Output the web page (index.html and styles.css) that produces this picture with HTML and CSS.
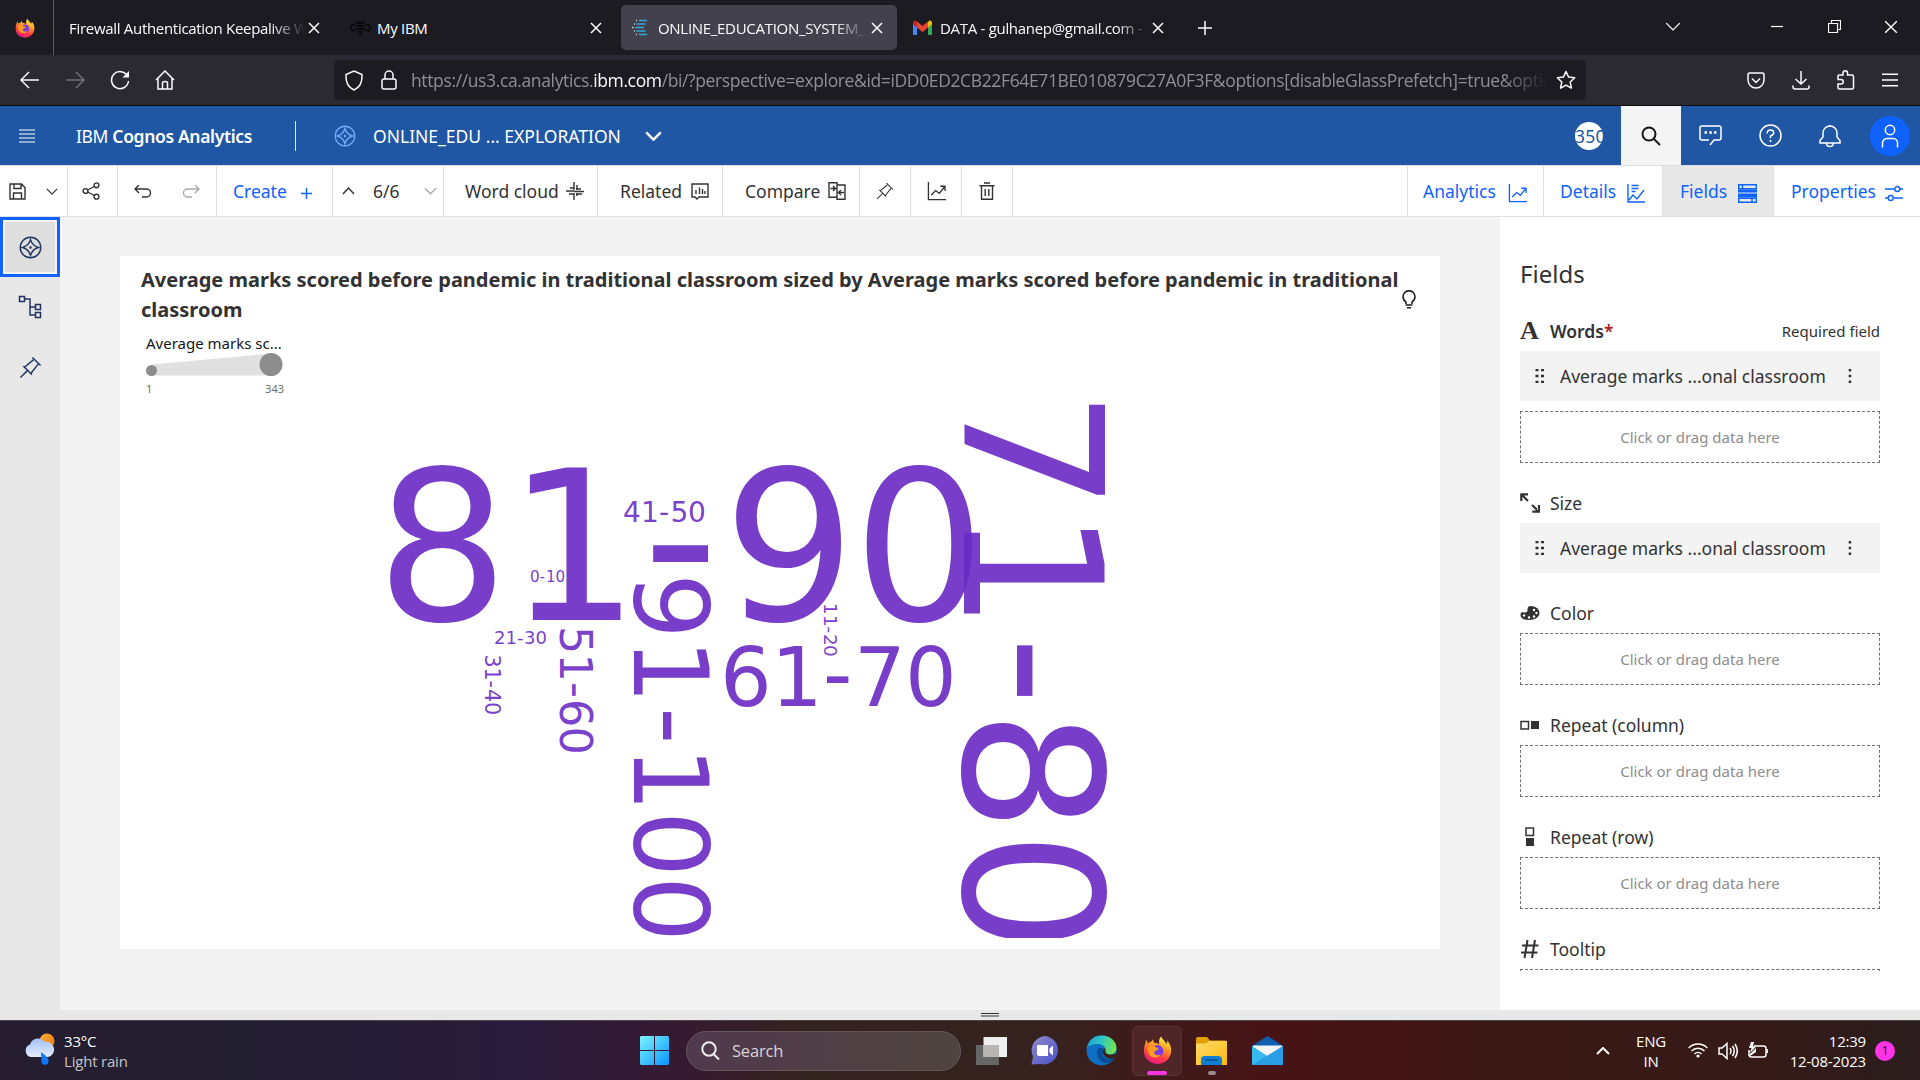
FILE: index.html
```html
<!DOCTYPE html>
<html lang="en">
<head>
<meta charset="utf-8">
<title>ONLINE_EDUCATION_SYSTEM_EXPLORATION</title>
<link rel="stylesheet" href="styles.css">
</head>
<body>
<svg width="0" height="0" class="defs">
  <defs>
    <linearGradient id="flame" x1=".7" y1="0" x2=".3" y2="1"><stop offset="0" stop-color="#fff44f"/><stop offset=".35" stop-color="#ffa020"/><stop offset=".7" stop-color="#ff3b45"/><stop offset="1" stop-color="#e31587"/></linearGradient>
    <linearGradient id="win" x1="0" y1="0" x2="1" y2="1"><stop offset="0" stop-color="#7df4ff"/><stop offset="1" stop-color="#0a94ff"/></linearGradient>
    <linearGradient id="edgeg" x1="0" y1="0" x2="1" y2=".2"><stop offset="0" stop-color="#1a9fd8"/><stop offset=".5" stop-color="#2fc3c6"/><stop offset="1" stop-color="#6be35a"/></linearGradient>
    <linearGradient id="cloud" x1="0" y1="0" x2="0" y2="1"><stop offset="0" stop-color="#a6c0f4"/><stop offset="1" stop-color="#e4ecff"/></linearGradient>
    <linearGradient id="sun" x1="0" y1="0" x2="1" y2="1"><stop offset="0" stop-color="#f6b53a"/><stop offset="1" stop-color="#f2720c"/></linearGradient>
    <linearGradient id="meet" x1="0" y1="0" x2="1" y2="1"><stop offset="0" stop-color="#8f8cc9"/><stop offset="1" stop-color="#4a50c8"/></linearGradient>
    <linearGradient id="folder" x1="0" y1="0" x2="1" y2="1"><stop offset="0" stop-color="#ffdc6b"/><stop offset="1" stop-color="#fbb90e"/></linearGradient>
    <symbol id="x" viewBox="0 0 12 12"><path d="M1 1l10 10M11 1L1 11"/></symbol>
    <symbol id="down" viewBox="0 0 14 8"><path d="M1 1l6 6 6-6"/></symbol>
    <symbol id="firefox" viewBox="0 0 32 32">
      <path d="M20 1c1 3 4 4.500 6 8 1-1 1-2 .6-3.500C30 9 31.500 13 31 18c-.8 8-7 13.500-15 13.500S1 25.500 1 17.500C1 12 2.500 9.500 3.500 5c1 1 1.500 2.500 1.700 4 1.500-1.500 3.300-2 4.300-2.300L11 4l1 4c3 0 5 1 6 2-1-4 0-7 2-9z" fill="url(#flame)"/>
      <circle cx="16" cy="17" r="6.500" fill="#7a3be0"/>
      <path d="M5 13c3-3 7-2.500 9 0 3 .5 4 2 2 3-2 .4-4 1.500-3.500 3.500.7 2 4 3 7 1.500-2 4-8 4.500-12 1C5 19.500 4.500 16 5 13z" fill="#ff9a20"/>
    </symbol>
    <symbol id="compass" viewBox="0 0 24 24"><circle cx="12" cy="12" r="10.700"/><path d="M12 3.800q1.900 6.300 8.200 8.200-6.300 1.900-8.200 8.200Q10.100 13.900 3.800 12 10.100 10.100 12 3.800z"/><circle cx="12" cy="12" r=".6"/></symbol>
    <symbol id="pin" viewBox="0 0 24 24"><path d="M1.500 22.500l7.500-7.500M4.500 10.500l9 9M6 11.500l9-7.500M14 1.500l8.500 8.500M12.500 18l7.500-9.500"/></symbol>
    <symbol id="trend" viewBox="0 0 20 20"><path d="M1.500 0v18.500H20M4.500 14l4.500-5 4 3 5.500-7M14 4.500h5v5"/></symbol>
    <symbol id="grip" viewBox="0 0 10 14"><path d="M.5 1h3M6 1h3M.5 7h3M6 7h3M.5 13h3M6 13h3" stroke-width="2.500"/></symbol>
    <symbol id="kebab" viewBox="0 0 4 14"><path d="M.7 1.300h2.500M.7 7h2.500M.7 12.700h2.500" stroke-width="2.500"/></symbol>
  </defs>
</svg>

<div class="screen">
  <header class="tabs">
    <div class="pinned"><svg width="20" height="20"><use href="#firefox"/></svg></div>
    <div class="tab t1"><span class="tt">Firewall Authentication Keepalive W</span><svg class="cl" width="12" height="12"><use href="#x"/></svg></div>
    <div class="tab t2"><svg class="bee" width="21" height="16" viewBox="0 0 21 16"><path d="M6 6C3 3 1 5 1 8s2 4 5 1M15 6c3-3 5-1 5 2s-2 4-5 1M8 4l-2-3M13 4l2-3" fill="none"/><path d="M8 3h5M7 6h7M7 9h7M8 12h5M9.500 14.500h2" stroke-width="1.800"/></svg><span class="tt">My IBM</span><svg class="cl" width="12" height="12"><use href="#x"/></svg></div>
    <div class="tab t3"><svg width="17" height="17" viewBox="0 0 17 17"><path d="M7 1.500h8M4.500 5h9M3 8.500h9M4.500 12h9M7 15.500h8" stroke="#35a6d8" stroke-width="1.600"/><path d="M4 1.500h1M2 5h1M0 8.500h1.500M2 12h1M4 15.500h1" stroke="#c8d8e8" stroke-width="1.600"/></svg><span class="tt">ONLINE_EDUCATION_SYSTEM_E</span><svg class="cl" width="12" height="12"><use href="#x"/></svg></div>
    <div class="tab t4"><svg width="19" height="15" viewBox="0 0 19 15"><path d="M0 3v11q0 1 1 1h3V6z" fill="#4285f4"/><path d="M19 3v11q0 1-1 1h-3V6z" fill="#34a853"/><path d="M15 2l1.500-1.500Q19 0 19 3v1l-4 3.500z" fill="#fbbc04"/><path d="M4 1.500L9.500 6 15 1.500v6L9.500 12 4 7.500z" fill="#ea4335"/><path d="M4 1.500L2.500.5Q0 0 0 3v1l4 3.500z" fill="#c5221f"/></svg><span class="tt">DATA - gulhanep@gmail.com -</span><svg class="cl" width="12" height="12"><use href="#x"/></svg></div>
    <svg class="plus" width="16" height="16" viewBox="0 0 16 16"><path d="M8 1v14M1 8h14"/></svg>
    <div class="winctl">
      <svg width="16" height="9" viewBox="0 0 14 8"><path d="M1 1l6 6 6-6"/></svg>
      <svg width="12" height="12" viewBox="0 0 12 12"><path d="M0 5.500h12"/></svg>
      <svg width="13" height="13" viewBox="0 0 13 13"><path d="M.5 3.500h9v9h-9zM3.500 3.500v-3h9v9h-3"/></svg>
      <svg width="14" height="14"><use href="#x"/></svg>
    </div>
  </header>

  <nav class="nav">
    <div class="navl">
      <svg width="20" height="18" viewBox="0 0 20 18"><path d="M19 9H1M9 1L1 9l8 8"/></svg>
      <svg class="dim" width="20" height="18" viewBox="0 0 20 18"><path d="M1 9h18M11 1l8 8-8 8"/></svg>
      <svg width="20" height="20" viewBox="0 0 20 20"><path d="M17.500 6A8.500 8.500 0 1 0 18.500 11"/><path d="M19 1v6.500h-6.500z" fill="#fbfbfe"/></svg>
      <svg width="20" height="20" viewBox="0 0 20 20"><path d="M1 10l9-9 9 9M3 8.500V19h14V8.500M7.500 19v-6q0-1.500 2.500-1.500t2.500 1.500v6"/></svg>
    </div>
    <div class="url">
      <svg width="20" height="21" viewBox="0 0 20 21"><path d="M10 1l8 3.500c.5 8-2.500 13-8 15.500C4.500 17.500 1.500 12.500 2 4.500z"/></svg>
      <svg width="16" height="20" viewBox="0 0 16 20"><path d="M4 9V5a4 4 0 0 1 8 0v4"/><rect x="1" y="9" width="14" height="10" rx="2"/></svg>
      <span class="addr">https://us3.ca.analytics.<b>ibm.com</b>/bi/?perspective=explore&amp;id=iDD0ED2CB22F64E71BE010879C27A0F3F&amp;options[disableGlassPrefetch]=true&amp;options[</span>
      <svg class="star" width="20" height="20" viewBox="0 0 20 20"><path d="M10 1.500l2.600 5.600 6.100.7-4.500 4.200 1.200 6.100-5.400-3-5.400 3 1.200-6.100L1.300 7.800l6.100-.7z" stroke-linejoin="round"/></svg>
    </div>
    <div class="navr">
      <svg width="18" height="17" viewBox="0 0 18 17"><path d="M2.500 1h13q1.500 0 1.500 1.500V8a8 8 0 0 1-16 0V2.500Q1 1 2.500 1zM5 6.500l4 4 4-4"/></svg>
      <svg width="18" height="19" viewBox="0 0 18 19"><path d="M9 0v13M3.500 8L9 13l5.500-5M1 14.500V16q0 2 2 2h12q2 0 2-2v-1.500"/></svg>
      <svg width="18" height="20" viewBox="0 0 18 20"><path d="M1 8V6q0-1 1-1h4V3a2 2 0 0 1 4.500 0v2H15q1.500 0 1.500 1.500V17.500q0 1.500-1.500 1.500H2.500Q1 19 1 17.500V14h3a2 2 0 0 0 0-4.500H1z"/></svg>
      <svg width="16" height="14" viewBox="0 0 16 14"><path d="M0 1.200h16M0 7h16M0 12.800h16"/></svg>
    </div>
  </nav>

  <div class="brand">
    <svg class="burger" width="16" height="14" viewBox="0 0 16 14"><path d="M0 1h16M0 5h16M0 9h16M0 13h16"/></svg>
    <span class="name">IBM <b>Cognos Analytics</b></span>
    <svg class="cmp" width="22" height="22"><use href="#compass"/></svg>
    <span class="doc">ONLINE_EDU ... EXPLORATION</span>
    <svg class="chev" width="17" height="10"><use href="#down"/></svg>
    <div class="brandr">
      <span class="count">350</span>
      <div class="find"><svg width="20" height="20" viewBox="0 0 20 20"><circle cx="8" cy="8" r="6.500"/><path d="M13 13l6 6"/></svg></div>
      <svg width="23" height="21" viewBox="0 0 23 21"><path d="M11 20l4-5h5q2 0 2-2V3q0-2-2-2H3Q1 1 1 3v10q0 2 2 2h7"/><path d="M5.500 7.500h2.500M10.300 7.500h2.500M15 7.500h2.500" stroke-width="2.500"/></svg>
      <svg width="23" height="23" viewBox="0 0 23 23"><circle cx="11.500" cy="11.500" r="10.500"/><path d="M8.200 9.500V8.700Q8.500 6 11.500 6t3.200 2.800q0 2-3.200 3.200v2.200M11.500 16v2"/></svg>
      <svg width="22" height="24" viewBox="0 0 22 24"><path d="M11 1v2M1 19v-2.500L4 13v-4a7 7 0 0 1 14 0v4l3 3.500V19zM7.500 19v.5a3.500 3 0 0 0 7 0V19"/></svg>
      <div class="user"><svg width="18" height="24" viewBox="0 0 18 24"><circle cx="9" cy="6" r="4.700"/><path d="M1.500 23.500V19a4.500 4.500 0 0 1 4.500-4.500h6a4.500 4.500 0 0 1 4.500 4.500v4.500"/></svg></div>
    </div>
  </div>

  <div class="tools">
    <div class="c1"><svg width="17" height="17" viewBox="0 0 17 17"><path d="M1 1h11.500L16 4.500V16H1zM5 1v4.500h7V1M4.500 16v-6h8v6"/></svg><svg width="12" height="7"><use href="#down"/></svg></div>
    <div class="c2"><svg width="18" height="18" viewBox="0 0 18 18"><circle cx="14.500" cy="3.300" r="2.400"/><circle cx="3.500" cy="9" r="2.400"/><circle cx="14.500" cy="14.700" r="2.400"/><path d="M5.700 8l6.500-3.500M5.700 10l6.500 3.500"/></svg></div>
    <div class="c3"><svg width="17" height="13" viewBox="0 0 17 13"><path d="M5 0L1 4l4 4M1 4h11.500a3.700 3.700 0 0 1 0 8H8"/></svg><svg class="gray" width="17" height="13" viewBox="0 0 17 13"><path d="M12 0l4 4-4 4M16 4H4.500a3.700 3.700 0 0 0 0 8H9"/></svg></div>
    <div class="c4 blue"><span>Create</span><svg width="11" height="11" viewBox="0 0 11 11"><path d="M5.500 0v11M0 5.500h11"/></svg></div>
    <div class="c5"><svg width="13" height="8" viewBox="0 0 13 8"><path d="M1 7l5.500-6L12 7"/></svg><span>6/6</span><svg class="gray" width="13" height="8"><use href="#down"/></svg></div>
    <div class="c6"><span>Word cloud</span><svg width="18" height="18" viewBox="0 0 18 18"><path d="M8 0v8M11 3v5M0 9h8M4 6h4M10 7h5M8 9.500h10M3 12h5M10 12h6M8 11v7M11 11v3"/></svg></div>
    <div class="c7"><span>Related</span><svg width="18" height="17" viewBox="0 0 18 17"><path d="M1 1h16v13H8l-2 2-2-2H1zM5 11V7M8.500 11V4.500M11.500 11V6M14 11V8"/></svg></div>
    <div class="c8"><span>Compare</span><svg width="18" height="18" viewBox="0 0 18 18"><path d="M1 .700h8v14.600H1zM9 3h8v14.300H9zM2.500 6.500h5M5 4l2.500 2.500L5 9M16 10.500h-5.500M13 8l-2.500 2.500L13 13"/></svg></div>
    <div class="ico"><svg width="18" height="18"><use href="#pin"/></svg></div>
    <div class="ico"><svg width="19" height="19"><use href="#trend"/></svg></div>
    <div class="ico"><svg width="16" height="18" viewBox="0 0 16 18"><path d="M5 1h6M.5 3.700h15M2.500 4v13.300h11V4M6.200 7v7M9.800 7v7"/></svg></div>
    <div class="panels blue">
      <div class="p1"><span>Analytics</span><svg width="19" height="19"><use href="#trend"/></svg></div>
      <div class="p2"><span>Details</span><svg width="18" height="19" viewBox="0 0 18 19"><path d="M1 0v18h17M4.500 1.500h7M4.500 4.500h7M4.500 7.500h4M2 16l4-5 4 4 7-9"/></svg></div>
      <div class="p3"><span>Fields</span><svg width="19" height="19" viewBox="0 0 19 19"><path d="M.7.700h17.600v4H.7zM4.500.7v4M.7 14.300h17.600v4H.7zM14 14.300v4"/><path d="M0 5.500h19v3H0zM0 9.500h19v4H0z" fill="currentColor" stroke="none"/></svg></div>
      <div class="p4"><span>Properties</span><svg width="18" height="17" viewBox="0 0 18 17"><path d="M0 4h9.500M15 4h3M0 13h3M8.500 13H18"/><circle cx="12.300" cy="4" r="2.500"/><circle cx="5.700" cy="13" r="2.500"/></svg></div>
    </div>
  </div>

  <main class="body">
    <aside class="rail">
      <div class="on"><svg width="23" height="23"><use href="#compass"/></svg></div>
      <div><svg width="24" height="24" viewBox="0 0 24 24"><path d="M1.500 1.500h5v5h-5zM17.500 9.500h5v5h-5zM17.500 17.500h5v5h-5zM6.500 4H12v16h5.500M12 12h5.500"/></svg></div>
      <div><svg width="23" height="23"><use href="#pin"/></svg></div>
    </aside>
    <section class="canvas">
      <article class="card">
        <div class="head">
          <h1><span class="l1">Average marks scored before pandemic in traditional classroom sized by Average marks scored before pandemic in traditional</span><br><span class="l2">classroom</span></h1>
          <svg class="bulb" width="14" height="19" viewBox="0 0 14 19"><path d="M4 14v-2Q1 10 1 6.700a6 6 0 0 1 12 0Q13 10 10 12v2M3.500 15h7M5 17.800h4"/></svg>
        </div>
        <div class="legend">
          <span class="lt">Average marks sc...</span>
          <svg width="138" height="24" viewBox="0 0 138 24"><path d="M6 11.500L125 .5v22H6z" fill="#e0e0e0"/><circle cx="5.500" cy="17.500" r="5.500" fill="#8d8d8d"/><circle cx="125" cy="11.500" r="11.500" fill="#8d8d8d"/></svg>
          <div class="lv"><span>1</span><span>343</span></div>
        </div>
        <svg class="words" width="1320" height="549" viewBox="120 390 1320 549">
          <text y="621" font-size="208.500" x="376 507 643 723 853">81<tspan dy="-9">-</tspan><tspan dy="9">90</tspan></text>
          <text transform="translate(964 0) rotate(90)" font-size="192" x="390 510 637 711 832">71<tspan dy="-8">-</tspan><tspan dy="8">80</tspan></text>
          <text transform="translate(634 0) rotate(90)" font-size="103.800" x="574 639 708 747 812 877">91<tspan dy="-5">-</tspan><tspan dy="5">100</tspan></text>
          <text y="707" font-size="81.300" x="720 771 823 854 905">61<tspan dy="-4">-</tspan><tspan dy="4">70</tspan></text>
          <text transform="translate(560 0) rotate(90)" font-size="44.400" x="627 654.500 683 700 727.500">51<tspan dy="-2">-</tspan><tspan dy="2">60</tspan></text>
          <text y="523" font-size="28.100" x="623 641 659 670.500 688">41-50</text>
          <text y="583" font-size="15.200" x="530 539.500 546 555.500">0-10</text>
          <text y="645" font-size="18.100" x="494 505.500 517 524 535.500">21-30</text>
          <text transform="translate(485 0) rotate(90)" font-size="20.800" x="655.500 668.500 681.500 690 703">31-40</text>
          <text transform="translate(823.500 0) rotate(90)" font-size="18.500" x="604 616 627.500 635 646">11-20</text>
        </svg>
      </article>
    </section>
    <aside class="fields">
      <h2>Fields</h2>
      <div class="fh"><i class="bigA">A</i><b>Words<em>*</em></b><small>Required field</small></div>
      <div class="chip"><svg width="10" height="14"><use href="#grip"/></svg><span>Average marks ...onal classroom</span><svg width="4" height="14"><use href="#kebab"/></svg></div>
      <div class="drop after"><span>Click or drag data here</span></div>
      <div class="fh"><svg width="20" height="20" viewBox="0 0 20 20"><path d="M1.300 8V1.300H8M1.300 1.300L8 8M19 12v6.700h-6.700M19 18.700L12 12" stroke-width="2.200"/></svg><span>Size</span></div>
      <div class="chip"><svg width="10" height="14"><use href="#grip"/></svg><span>Average marks ...onal classroom</span><svg width="4" height="14"><use href="#kebab"/></svg></div>
      <div class="fh"><svg width="20" height="14" viewBox="0 0 20 14"><path d="M10 0c6 0 9.500 3 9.500 7S15 14 9 14 .5 12 .5 9s2-3 3-2.700C6 7 7.500 6 7.500 4.500S7.500.3 10 0z" fill="#323232" stroke="none"/><g fill="#fff" stroke="none"><circle cx="14" cy="4" r="1.200"/><circle cx="16.500" cy="7" r="1.200"/><circle cx="14" cy="10.500" r="1.200"/><circle cx="9" cy="11.500" r="1.200"/><circle cx="4" cy="9.500" r="1.200"/></g></svg><span>Color</span></div>
      <div class="drop"><span>Click or drag data here</span></div>
      <div class="fh"><svg width="20" height="20" viewBox="0 0 20 20"><path d="M1 6.500h7.500V14H1z"/><path d="M11 6h8v8h-8z" fill="#323232" stroke="none"/></svg><span>Repeat (column)</span></div>
      <div class="drop"><span>Click or drag data here</span></div>
      <div class="fh"><svg width="20" height="20" viewBox="0 0 20 20"><path d="M6 1h7.500v7.500H6z"/><path d="M6 11h8v8H6z" fill="#323232" stroke="none"/></svg><span>Repeat (row)</span></div>
      <div class="drop"><span>Click or drag data here</span></div>
      <div class="fh"><svg width="20" height="20" viewBox="0 0 20 20"><path d="M7.500 1l-3 18M15 1l-3 18M2 6.500h16.500M1 13.500h16.500" stroke-width="2"/></svg><span>Tooltip</span></div>
      <div class="cut"><div class="drop"></div></div>
    </aside>
  </main>

  <div class="splitter"><i></i><i></i></div>

  <footer class="task">
    <svg class="wx" width="32" height="32" viewBox="0 0 32 32"><circle cx="23" cy="8" r="7.500" fill="url(#sun)"/><path d="M7 24a6.500 6.500 0 0 1-1-12.500A8.500 8.500 0 0 1 21 9a7 7 0 0 1 3 15z" fill="url(#cloud)"/><path d="M17 19c3 3 8 5 7.500 9a3.500 3.500 0 0 1-7 .5z" fill="#1277ff"/></svg>
    <div class="wt"><span>33°C</span><span class="soft">Light rain</span></div>
    <div class="apps">
      <svg class="a1" width="29" height="29" viewBox="0 0 29 29"><path d="M1 0h13v14H0V1zM15 0h13l1 1v13H15zM0 15h14v14H1l-1-1zM15 15h14v13l-1 1H15z" fill="url(#win)"/></svg>
      <div class="search"><svg width="19" height="19" viewBox="0 0 19 19"><circle cx="8" cy="8" r="6.700"/><path d="M12.500 13l5.500 5.500"/></svg><span>Search</span></div>
      <svg class="a2" width="31" height="28" viewBox="0 0 31 28"><path d="M0 8h23v20H0z" fill="#666"/><path d="M7.500 0H31v20H7.500z" fill="#eee"/><path d="M7.500 8H23v12H7.500z" fill="#b8b6b4"/></svg>
      <svg class="a3" width="29" height="29" viewBox="0 0 29 29"><path d="M14.500 0A14.300 14.300 0 1 1 9 28L.5 28.500l1.500-8A14.300 14.300 0 0 1 14.500 0z" fill="url(#meet)"/><path d="M6 9h11v11H8q-2 0-2-2zM18.500 12.500L22 9.500v10l-3.500-3z" fill="#fff"/></svg>
      <svg class="a4" width="31" height="31" viewBox="0 0 31 31"><circle cx="15.500" cy="15.500" r="15" fill="#0f6fc4"/><path d="M.8 13C3 4 9 .5 15.500.5c9 0 15 6 15 12.500 0 5-4 6.500-7 6.500-4 0-5-2-4-4 .5-5-5-7-9-6.500C5.500 9.500 2 11 .8 13z" fill="url(#edgeg)"/><path d="M12 14c-3 7 2 14 9 14 3 0 6-2 7.500-4.500-6 2-11 0-12-4-.3-2 .5-3.500 2-4.500-2-2.500-5-2.500-6.500-1z" fill="#0b4c94"/><path d="M19.500 12.500c-1 3 0 7 4 7 3 0 6-.5 7.500-1l-.5 4c-3 2-8 1.500-11-.5s-3.500-7 0-9.500z" fill="#3a2220"/></svg>
      <div class="ff"><svg width="29" height="30"><use href="#firefox"/></svg><i></i></div>
      <div class="ex"><svg width="31" height="28" viewBox="0 0 31 28"><path d="M0 2q0-2 2-2h9l3 3.500h15q2 0 2 2V10H0z" fill="#e0a106"/><path d="M0 6.500h10l3-2.500h18v24H0z" fill="url(#folder)"/><path d="M5 28v-5q0-4 4-4h13q4 0 4 4v5z" fill="#0f7fd4"/><path d="M9 23h13" stroke="#0a4f94" stroke-width="1.500"/></svg><i></i></div>
      <svg class="a7" width="31" height="29" viewBox="0 0 31 29"><path d="M0 10L15.500 0 31 10v4H0z" fill="#0f5fb0"/><path d="M1 9.500h29V20H1z" fill="#f4f4f4"/><path d="M0 10l15.500 10L31 10v19H0z" fill="#35b9ee"/><path d="M0 29L31 10v19z" fill="#2596e0" opacity=".75"/></svg>
    </div>
    <div class="tray">
      <svg width="14" height="8" viewBox="0 0 14 8"><path d="M1 7l6-6 6 6" stroke-width="2"/></svg>
      <div class="lang"><span>ENG</span><span>IN</span></div>
      <svg class="wifi" width="20" height="15" viewBox="0 0 20 15"><path d="M.7 5a13 13 0 0 1 18.600 0M3.500 8a9 9 0 0 1 13 0M6.500 11a5 5 0 0 1 7 0"/><circle cx="10" cy="13" r="1.600" fill="#fff" stroke="none"/></svg>
      <svg class="spk" width="20" height="18" viewBox="0 0 20 18"><path d="M1 6h3l5-4.500v15L4 12H1zM12 6q2 3 0 6M14.500 4q3.500 5 0 10M17 2q4.500 7 0 14"/></svg>
      <svg class="bat" width="21" height="17" viewBox="0 0 21 17"><path d="M6 4h9.500q2.500 0 2.500 2.500v6q0 2.500-2.500 2.500H3.500Q1 15 1 12.500V8"/><path d="M18.500 7h1.500v4h-1.500zM3 0L1 6h2.500L2 11l6-6.500H5L6 0zM2 14V12l6-6v4z" fill="#fff" stroke-width=".6"/></svg>
      <div class="clock"><span>12:39</span><span>12-08-2023</span></div>
      <span class="badge">1</span>
    </div>
  </footer>
</div>
</body>
</html>
```
FILE: styles.css
```css
* { box-sizing: border-box; }
body { margin: 0; background: #f3f3f3; overflow: hidden; font-family: "Noto Sans", sans-serif; }
.defs { display: block; position: absolute; }
svg { display: block; flex: none; fill: none; stroke: currentColor; stroke-width: 1.5; }
svg [fill^="url"], svg path[fill^="#"], svg circle[fill^="#"] { stroke: none; }
span, b { white-space: nowrap; }
.screen { width: 1920px; height: 1080px; display: flex; flex-direction: column; overflow: hidden; }

/* browser chrome */
.tabs { height: 55px; flex: none; background: #1c1b22; color: #fbfbfe; display: flex; align-items: center; font: 15px "Open Sans", sans-serif; letter-spacing: -.3px; }
.pinned { width: 54px; height: 55px; border-right: 1px solid #5b5b66; display: flex; align-items: center; padding-left: 15px; }
.tab { height: 45px; display: flex; align-items: center; border-radius: 5px; }
.tab .tt { overflow: hidden; flex: 1; }
.tab .cl { width: 12px; }
.t1 { width: 276px; padding: 0 10px 0 15px; }
.t1 .tt, .t3 .tt, .t4 .tt { -webkit-mask-image: linear-gradient(90deg, #000 84%, transparent 99%); mask-image: linear-gradient(90deg, #000 84%, transparent 99%); }
.t2 { width: 291px; padding: 0 19px 0 20px; gap: 6px; }
.bee { color: #08080a; }
.t3 { width: 276px; padding: 0 14px 0 11px; gap: 9px; background: #42414d; }
.t4 { width: 282px; padding: 0 15px 0 16px; gap: 8px; }
.t3 .tt, .t4 .tt { margin-right: -6px; }
.plus { margin-left: 18px; }
.winctl { margin-left: auto; display: flex; align-items: center; padding-right: 22px; }
.winctl svg { stroke-width: 1.2; margin-bottom: 2px; }
.winctl svg:nth-child(2) { margin-left: 90px; }
.winctl svg:nth-child(3) { margin-left: 45px; }
.winctl svg:nth-child(4) { margin-left: 43px; }
.nav { height: 51px; flex: none; background: #2b2a33; border-bottom: 1px solid #0c0c0d; display: flex; align-items: center; color: #fbfbfe; }
.navl { display: flex; align-items: center; gap: 25px; width: 334px; padding-left: 20px; }
.dim { color: #73727a; }
.url { width: 1252px; height: 40px; border-radius: 5px; background: #1c1b22; display: flex; align-items: center; padding: 0 10px; }
.url svg:nth-child(2) { margin-left: 17px; }
.addr { font: 17.5px "Open Sans", sans-serif; color: #8f8e95; width: 1136px; margin-left: 14px; overflow: hidden; letter-spacing: -.37px; -webkit-mask-image: linear-gradient(90deg, #000 96%, transparent); mask-image: linear-gradient(90deg, #000 96%, transparent); }
.addr b { font-weight: 400; color: #fbfbfe; }
.star { margin-left: auto; }
.navr { margin-left: auto; display: flex; align-items: center; gap: 27px; padding-right: 22px; }

/* product header */
.brand { height: 59px; flex: none; background: #2057a5; color: #fff; display: flex; align-items: center; font-size: 17.5px; }
.burger { margin-left: 19px; stroke-width: 1.2; }
.name { margin-left: 41px; width: 220px; height: 30px; line-height: 30px; border-right: 1.500px solid #dfe8f5; letter-spacing: -.35px; }
.name b { font-weight: 600; }
.cmp { margin-left: 38px; color: #78a9ff; }
.doc { margin-left: 17px; width: 250px; }
.chev { margin-left: 22px; stroke-width: 2; }
.brandr { margin-left: auto; display: flex; align-items: center; height: 59px; padding-right: 10px; }
.count { width: 28px; height: 28px; border-radius: 14px; background: #fff; color: #2057a5; overflow: hidden; line-height: 28px; margin-right: 18px; letter-spacing: .2px; }
.find { width: 60px; height: 59px; background: #f4f4f4; color: #161616; display: grid; place-items: center; margin-right: 18px; }
.find svg { stroke-width: 2; }
.brandr > svg { margin-right: 37px; }
.brandr > svg:nth-of-type(3) { margin-right: 29px; }
.user { width: 40px; height: 40px; border-radius: 50%; background: #0f62fe; display: grid; place-items: center; }

/* toolbar */
.tools { height: 52px; flex: none; background: #fff; border-top: 1px solid #dcdcdc; border-bottom: 1px solid #e0e0e0; display: flex; color: #323232; font-size: 17.5px; }
.tools > div:not(.panels), .panels > div { height: 50px; display: flex; align-items: center; border-right: 1px solid #e0e0e0; }
.blue { color: #0f62fe; }
.gray { color: #a8a8a8; }
.tools svg { stroke-width: 1.4; }
.c1 { width: 68px; padding-left: 9px; gap: 20px; }
.c2 { width: 50px; padding-left: 14px; }
.c3 { width: 99px; padding-left: 16px; gap: 32px; }
.c4 { width: 116px; padding-left: 16px; }
.c4 span { width: 68px; }
.c4 svg { margin-top: 5px; }
.c5 { width: 111px; padding-left: 9px; }
.c5 span { width: 49px; margin-left: 18px; }
.c5 svg:last-child { margin-left: 2px; }
.c6 { width: 154px; padding-left: 21px; }
.c6 span { width: 101px; }
.c7 { width: 125px; padding-left: 22px; }
.c7 span { width: 71px; }
.c8 { width: 137px; padding-left: 22px; }
.c8 span { width: 83px; }
.ico { width: 51px; justify-content: center; }
.panels { margin-left: auto; display: flex; border-left: 1px solid #e0e0e0; }
.panels svg { margin-top: 4px; }
.panels .p1 { width: 136px; padding-left: 15px; }
.p1 span { width: 85px; }
.panels .p2 { width: 119px; padding-left: 16px; }
.p2 span { width: 67px; }
.panels .p3 { width: 111px; padding-left: 17px; background: #e8e8e8; }
.p3 span { width: 58px; }
.panels .p4 { width: 146px; padding-left: 17px; border: 0; }
.p4 span { width: 94px; }

/* workspace */
.body { flex: 1; display: flex; min-height: 0; }
.rail { width: 60px; background: #e8e8e8; color: #20355f; }
.rail div { height: 60px; display: grid; place-items: center; }
.rail .on { background: #dedede; border: 3px solid #0f62fe; box-shadow: inset 0 0 0 2px #f4f4f4; }
.canvas { width: 1440px; padding: 39px 60px 60px; background: #f3f3f3; }
.card { height: 693px; background: #fff; }
.head { height: 77px; display: flex; justify-content: space-between; padding: 9px 24px 0 21px; }
h1 { margin: 0; font-size: 20px; font-weight: 700; line-height: 30px; color: #323232; }
.bulb { color: #161616; margin-top: 25px; }
.legend { width: 138px; margin-left: 26px; height: 56px; }
.lt { display: block; font-size: 15px; line-height: 20px; height: 20px; overflow: hidden; color: #161616; }
.lv { display: flex; justify-content: space-between; font-size: 11px; line-height: 14px; color: #6f6f6f; margin-top: 5px; }
.words { font-family: "DejaVu Sans", sans-serif; }
.words text { fill: #6929c4; fill-opacity: .9; stroke: none; }

/* field slots */
.fields { width: 420px; background: #fff; padding: 36px 40px 0 20px; color: #323232; font-size: 17.5px; }
h2 { margin: 0 0 16px; height: 42px; line-height: 42px; font-size: 24px; font-weight: 400; }
.fh { height: 40px; display: flex; align-items: center; gap: 10px; }
.drop + .fh, .chip + .fh { margin-top: 20px; }
.bigA { width: 20px; font: bold 26px "Liberation Serif", serif; }
.fh b { font-weight: 600; }
em { font-style: normal; color: #b02020; }
small { margin-left: auto; font-size: 15px; }
.chip { height: 50px; background: #f3f3f3; display: flex; align-items: center; padding: 0 28px 0 15px; }
.chip span { width: 270px; margin-left: 15px; }
.chip svg:last-child { margin-left: auto; }
.drop { height: 52px; border: 1px dashed #6f6f6f; display: grid; place-items: center; font-size: 15px; color: #8d8d8d; }
.after { margin-top: 10px; }
.cut { height: 2px; overflow: hidden; }
.splitter { height: 10px; flex: none; background: #e8e8e8; display: flex; flex-direction: column; align-items: center; gap: 1px; padding: 3px 0 0 60px; }
.splitter i { width: 18px; height: 1px; background: #323232; }
.splitter i + i { height: 2px; background: #8d8d8d; }

/* taskbar */
.task { height: 60px; flex: none; border-top: 1px solid #4a464a; background: linear-gradient(90deg, #261d30 0, #221f30 240px, #2a1c3c 520px, #371a30 690px, #33231f 800px, #35221f 1040px, #471416 1260px, #431515 1400px, #3a1813 1500px, #351a17 1750px, #2b1d1e 1920px); color: #fff; display: flex; align-items: center; font: 15px/20px "Open Sans", sans-serif; letter-spacing: -.2px; }
.wx { margin-left: 24px; margin-bottom: 4px; }
.wt, .lang, .clock { display: flex; flex-direction: column; }
.wt { margin-left: 8px; width: 576px; }
.soft { color: #c8c4ca; }
.apps { display: flex; align-items: center; height: 59px; }
.search { width: 275px; height: 40px; margin: 0 15px 0 17px; border-radius: 20px; border: 1px solid #66565c; background: linear-gradient(90deg, #50394d, #4f443f); display: flex; align-items: center; padding-left: 14px; gap: 12px; color: #d8d4d6; font-size: 16.5px; }
.search svg { stroke-width: 2; color: #eee; }
.a3 { margin-left: 24px; }
.a4 { margin-left: 26px; }
.ff, .ex { display: flex; flex-direction: column; align-items: center; }
.ff { margin-left: 15px; width: 50px; height: 50px; border-radius: 5px; background: #4e2628; border: 1px solid #5a3032; padding-top: 8px; }
.ff i { width: 20px; height: 4px; border-radius: 2px; background: #ff34e6; margin-top: 6px; }
.ex { margin-left: 14px; padding-top: 10px; }
.ex i { width: 8px; height: 4px; border-radius: 2px; background: #9c8a8c; margin-top: 6px; }
.a7 { margin-left: 25px; }
.tray { margin-left: auto; display: flex; align-items: center; padding-right: 25px; }
.lang { text-align: center; width: 40px; margin-left: 21px; }
.wifi { margin-left: 17px; }
.spk { margin-left: 10px; }
.bat { margin-left: 10px; }
.clock { text-align: right; width: 97px; }
.badge { width: 20px; height: 20px; border-radius: 50%; background: #ff34e6; color: #301030; text-align: center; font-size: 12px; margin-left: 9px; }
```
